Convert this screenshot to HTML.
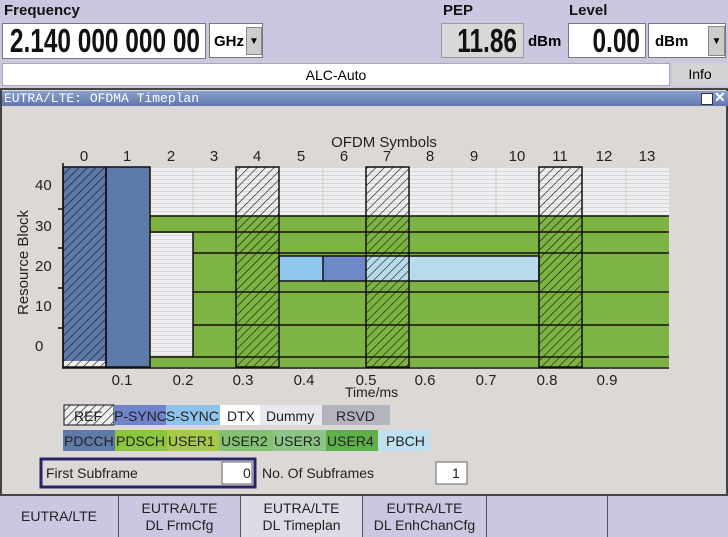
<!DOCTYPE html><html><head><style>
body{margin:0;width:728px;height:537px;overflow:hidden;background:#c9c8e0;font-family:"Liberation Sans",sans-serif;position:relative}
.a{position:absolute}
.lbl{font-weight:bold;font-size:15px;color:#111}
.box{background:#fff;border:1px solid #777;box-sizing:border-box}
.big{font-family:"Liberation Sans Narrow","Liberation Sans",sans-serif;font-size:33px;font-weight:bold;transform:scaleX(.74);transform-origin:right;color:#111;text-align:right;white-space:nowrap}
.sk{position:absolute;top:496px;height:41px;background:#c9c8e0;border-left:1px solid #555;box-sizing:border-box;text-align:center;font-size:14px;color:#222;line-height:17px}
</style></head><body>
<div class="a lbl" style="left:4px;top:2px">Frequency</div>
<div class="a lbl" style="left:443px;top:2px">PEP</div>
<div class="a lbl" style="left:569px;top:2px">Level</div>
<div class="a box" style="left:2px;top:23px;width:204px;height:36px"></div>
<div class="a big" style="left:-198px;top:23px;width:398px;line-height:36px">2.140 000 000 00</div>
<div class="a box" style="left:209px;top:23px;width:54px;height:35px;font-size:15px;font-weight:bold;line-height:35px;padding-left:4px">GHz</div>
<div class="a" style="left:246px;top:27px;width:16px;height:28px;background:#ccc;border:1px solid #888;box-sizing:border-box;font-size:10px;text-align:center;line-height:28px">▼</div>
<div class="a" style="left:441px;top:23px;width:83px;height:35px;background:#d8d8d8;border:1px solid #999;box-sizing:border-box"></div>
<div class="a big" style="left:317px;top:23px;width:200px;line-height:36px">11.86</div>
<div class="a" style="left:528px;top:33px;font-size:15px;font-weight:bold">dBm</div>
<div class="a box" style="left:568px;top:23px;width:78px;height:35px"></div>
<div class="a big" style="left:440px;top:23px;width:200px;line-height:36px">0.00</div>
<div class="a box" style="left:648px;top:23px;width:78px;height:35px;font-size:15px;font-weight:bold;line-height:35px;padding-left:6px">dBm</div>
<div class="a" style="left:708px;top:26px;width:17px;height:30px;background:#ccc;border:1px solid #888;box-sizing:border-box;font-size:10px;text-align:center;line-height:30px">▼</div>
<div class="a box" style="left:2px;top:63px;width:668px;height:23px;text-align:center;font-size:14px;line-height:23px;border-color:#aaa">ALC-Auto</div>
<div class="a" style="left:672px;top:63px;width:56px;height:23px;background:#d6d3d6;text-align:center;font-size:14px;line-height:23px">Info</div>
<div class="a" style="left:0;top:88px;width:728px;height:408px;background:#dcd8d6;border:2px solid #444;box-sizing:border-box"></div>
<div class="a" style="left:2px;top:91px;width:726px;height:15px;background:linear-gradient(#8aa0cc,#5f77ad);color:#fff;font-family:'Liberation Mono',monospace;font-size:13px;line-height:15px;padding-left:2px">EUTRA/LTE: OFDMA Timeplan</div>
<div class="a" style="left:701px;top:93px;width:10px;height:10px;background:#fff;border:1px solid #333"></div>
<div class="a" style="left:714px;top:89px;color:#fff;font-size:14px;font-weight:bold">✕</div>
<svg class="a" style="left:0;top:106px" width="728" height="390" viewBox="0 106 728 390" font-family="Liberation Sans" font-size="14" fill="#222">
<defs>
<pattern id="h" width="6" height="6" patternUnits="userSpaceOnUse" patternTransform="rotate(45)"><line x1="0" y1="0" x2="0" y2="6" stroke="#111" stroke-width="1.2"/></pattern>
<pattern id="g" width="8" height="4" patternUnits="userSpaceOnUse"><rect width="8" height="4" fill="#eeeef0"/><line x1="0" y1="3.5" x2="8" y2="3.5" stroke="#d6d6da" stroke-width="1"/></pattern>
</defs>
<text x="384" y="147" text-anchor="middle" font-size="15">OFDM Symbols</text>
<g text-anchor="middle" font-size="15">
<text x="84" y="161">0</text><text x="127" y="161">1</text><text x="171" y="161">2</text><text x="214" y="161">3</text><text x="257" y="161">4</text><text x="301" y="161">5</text><text x="344" y="161">6</text><text x="387" y="161">7</text><text x="430" y="161">8</text><text x="474" y="161">9</text><text x="517" y="161">10</text><text x="560" y="161">11</text><text x="604" y="161">12</text><text x="647" y="161">13</text>
</g>
<rect x="63" y="167" width="606" height="200" fill="url(#g)"/>
<g stroke="#ccc"><line x1="193" y1="167" x2="193" y2="216"/><line x1="323" y1="167" x2="323" y2="216"/><line x1="452" y1="167" x2="452" y2="216"/><line x1="496" y1="167" x2="496" y2="216"/><line x1="626" y1="167" x2="626" y2="216"/></g>
<rect x="149" y="216" width="520" height="151" fill="#7cb342"/>
<rect x="149" y="233" width="44" height="123" fill="url(#g)"/>
<rect x="279" y="256" width="44" height="25" fill="#8fc8ec"/>
<rect x="323" y="256" width="43" height="25" fill="#6f88c8"/>
<rect x="366" y="256" width="173" height="25" fill="#b7dbea"/>
<g stroke="#111" stroke-width="1.5" fill="none">
<line x1="149" y1="216" x2="669" y2="216"/><line x1="149" y1="232" x2="669" y2="232"/>
<line x1="193" y1="253" x2="669" y2="253"/><line x1="193" y1="292" x2="669" y2="292"/>
<line x1="193" y1="325" x2="669" y2="325"/><line x1="149" y1="357" x2="669" y2="357"/>
<rect x="279" y="256" width="260" height="25"/><line x1="323" y1="256" x2="323" y2="281"/>
<line x1="193" y1="232" x2="193" y2="357"/>
</g>
<rect x="63" y="167" width="43" height="200" fill="#5e7aa8"/>
<rect x="106" y="167" width="44" height="200" fill="#5e7aa8"/>
<rect x="63" y="361" width="43" height="6" fill="#eee"/>
<rect x="63" y="167" width="43" height="200" fill="url(#h)"/>
<rect x="236" y="167" width="43" height="200" fill="url(#h)"/>
<rect x="366" y="167" width="43" height="200" fill="url(#h)"/>
<rect x="539" y="167" width="43" height="200" fill="url(#h)"/>
<g stroke="#111" stroke-width="1.5" fill="none">
<rect x="63" y="167" width="43" height="200"/><rect x="106" y="167" width="44" height="200"/>
<rect x="236" y="167" width="43" height="200"/><rect x="366" y="167" width="43" height="200"/><rect x="539" y="167" width="43" height="200"/>
<line x1="63" y1="163" x2="63" y2="368"/><line x1="62" y1="368" x2="669" y2="368"/>
<line x1="58" y1="209" x2="63" y2="209"/><line x1="58" y1="248" x2="63" y2="248"/><line x1="58" y1="288" x2="63" y2="288"/><line x1="58" y1="328" x2="63" y2="328"/>
</g>
<g font-size="15"><text x="35" y="190">40</text><text x="35" y="231">30</text><text x="35" y="271">20</text><text x="35" y="311">10</text><text x="35" y="351">0</text></g>
<text transform="translate(28,315) rotate(-90)" font-size="15">Resource Block</text>
<g text-anchor="middle" font-size="15"><text x="122" y="385">0.1</text><text x="183" y="385">0.2</text><text x="243" y="385">0.3</text><text x="304" y="385">0.4</text><text x="366" y="385">0.5</text><text x="425" y="385">0.6</text><text x="486" y="385">0.7</text><text x="547" y="385">0.8</text><text x="607" y="385">0.9</text></g>
<text x="345" y="397" font-size="14">Time/ms</text>
<g font-size="14">
<rect x="64" y="405" width="50" height="20" fill="#f0eeee"/><rect x="64" y="405" width="50" height="20" fill="url(#h)"/>
<rect x="64" y="405" width="50" height="20" fill="none" stroke="#111"/>
<text x="74" y="421">REF</text>
<rect x="114" y="405" width="52" height="20" fill="#7084cc"/><text x="114" y="421">P-SYNC</text>
<rect x="166" y="405" width="54" height="20" fill="#8ec4ec"/><text x="166" y="421">S-SYNC</text>
<rect x="220" y="405" width="40" height="20" fill="#fff"/><text x="227" y="421">DTX</text>
<rect x="260" y="405" width="62" height="20" fill="#e8e8ee"/><text x="266" y="421">Dummy</text>
<rect x="322" y="405" width="68" height="20" fill="#b4b4c0"/><text x="336" y="421">RSVD</text>
<rect x="63" y="430" width="52" height="21" fill="#5e7aa8"/><text x="64" y="446">PDCCH</text>
<rect x="115" y="430" width="52" height="21" fill="#8cc63f"/><text x="116" y="446">PDSCH</text>
<rect x="167" y="430" width="52" height="21" fill="#a6c94a"/><text x="168" y="446">USER1</text>
<rect x="219" y="430" width="54" height="21" fill="#82c272"/><text x="221" y="446">USER2</text>
<rect x="273" y="430" width="53" height="21" fill="#8cc687"/><text x="274" y="446">USER3</text>
<rect x="326" y="430" width="52" height="21" fill="#5fb04a"/><text x="327" y="446">USER4</text>
<rect x="378" y="430" width="52" height="21" fill="#bfe0ee"/><text x="386" y="446">PBCH</text>
</g>
<rect x="41" y="459" width="214" height="28" fill="none" stroke="#2a2266" stroke-width="3"/>
<text x="46" y="478" font-size="14">First Subframe</text>
<rect x="222" y="462" width="30" height="22" fill="#fff" stroke="#666"/><text x="243" y="478" font-size="14">0</text>
<text x="262" y="478" font-size="14">No. Of Subframes</text>
<rect x="436" y="462" width="31" height="22" fill="#fff" stroke="#666"/><text x="452" y="478" font-size="14">1</text>
</svg>
<div class="sk" style="left:0;width:118px;border:none;line-height:41px">EUTRA/LTE</div>
<div class="sk" style="left:118px;width:122px;padding-top:4px">EUTRA/LTE<br>DL FrmCfg</div>
<div class="sk" style="left:240px;width:122px;padding-top:4px;background:#dcdce6">EUTRA/LTE<br>DL Timeplan</div>
<div class="sk" style="left:362px;width:124px;padding-top:4px">EUTRA/LTE<br>DL EnhChanCfg</div>
<div class="sk" style="left:486px;width:121px"></div>
<div class="sk" style="left:607px;width:121px"></div>
</body></html>
